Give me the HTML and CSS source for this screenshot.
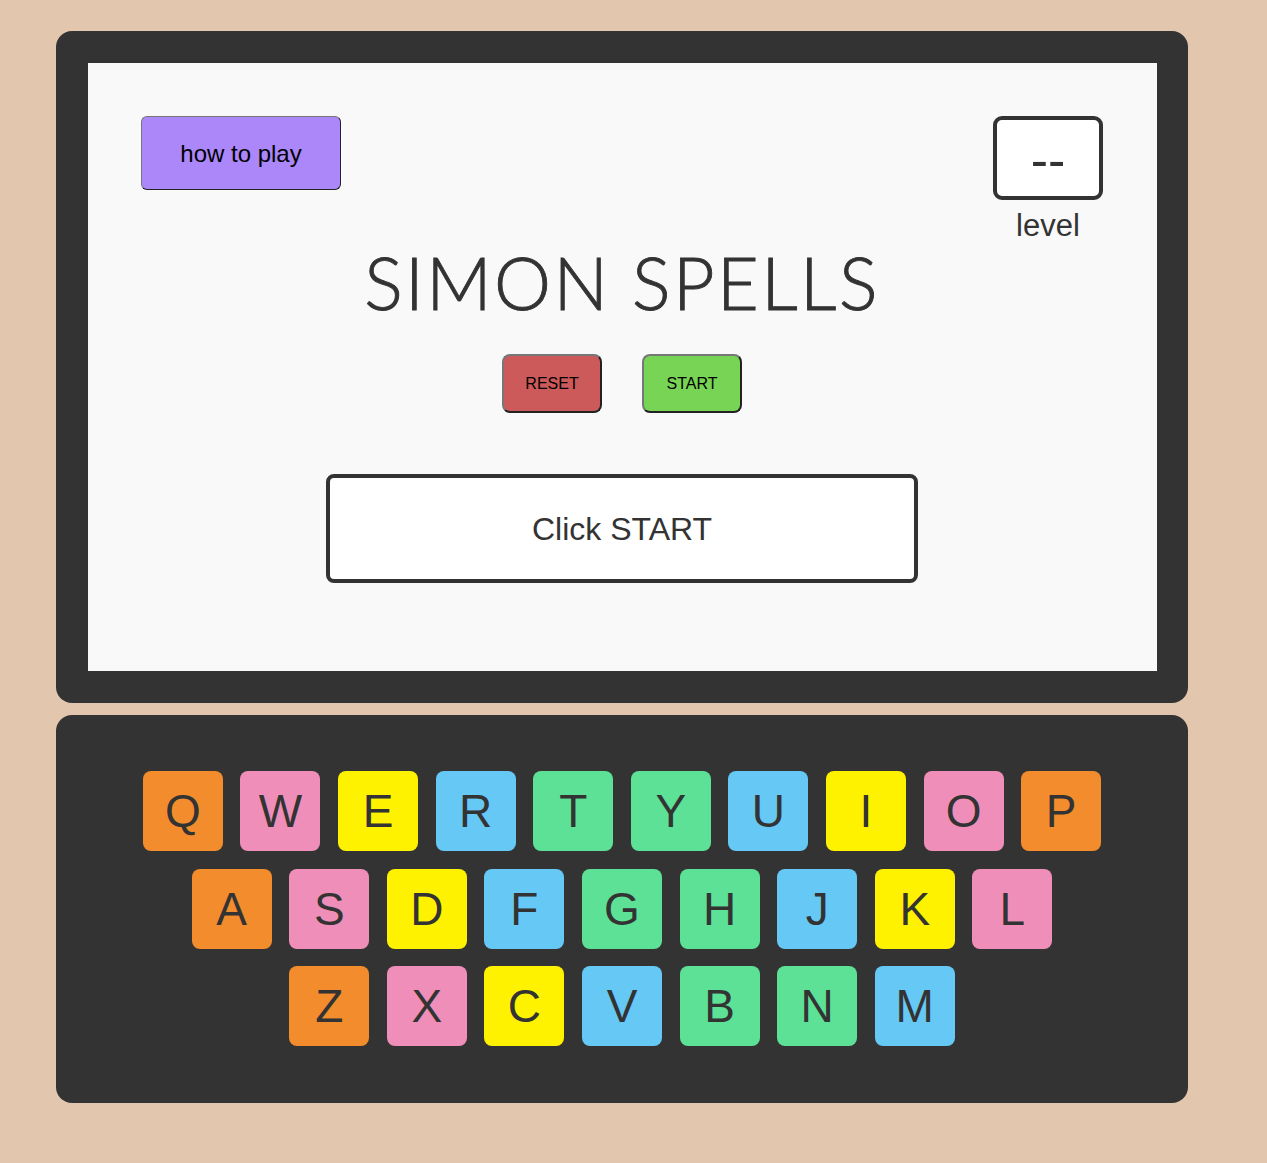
FILE: index.html
```html
<!DOCTYPE html>
<html>
<head>
<meta charset="utf-8">
<link rel="stylesheet" href="styles.css">
</head>
<body>
<div class="app">
  <div class="frame">
    <div class="screen">
      <div class="top-row">
        <button class="help-btn">how to play</button>
        <div class="level">
          <div class="level-box">--</div>
          <div class="level-label">level</div>
        </div>
      </div>
      <h1 class="title">SIMON SPELLS</h1>
      <div class="controls">
        <button class="ctrl reset">RESET</button>
        <button class="ctrl start">START</button>
      </div>
      <div class="message">Click START</div>
    </div>
  </div>
  <div class="keyboard">
    <div class="krow">
      <div class="key orange">Q</div><div class="key pink">W</div><div class="key yellow">E</div><div class="key blue">R</div><div class="key green">T</div><div class="key green">Y</div><div class="key blue">U</div><div class="key yellow">I</div><div class="key pink">O</div><div class="key orange">P</div>
    </div>
    <div class="krow">
      <div class="key orange">A</div><div class="key pink">S</div><div class="key yellow">D</div><div class="key blue">F</div><div class="key green">G</div><div class="key green">H</div><div class="key blue">J</div><div class="key yellow">K</div><div class="key pink">L</div>
    </div>
    <div class="krow">
      <div class="key orange">Z</div><div class="key pink">X</div><div class="key yellow">C</div><div class="key blue">V</div><div class="key green">B</div><div class="key green">N</div><div class="key blue">M</div>
    </div>
  </div>
</div>
</body>
</html>
```

FILE: styles.css
```css
html, body {
  margin: 0;
  padding: 0;
  background: #e2c6ae;
  font-family: "Liberation Sans", Arial, sans-serif;
}
.app {
  width: 1132px;
  margin: 31px 0 0 56px;
  display: flex;
  flex-direction: column;
  gap: 12px;
}
.frame {
  background: #333333;
  border-radius: 16px;
  padding: 32px 31px 32px 32px;
}
.screen {
  background: #f9f9f9;
  height: 608px;
  box-sizing: border-box;
  padding: 53px 54px 0 53px;
  display: flex;
  flex-direction: column;
  align-items: center;
}
.top-row {
  align-self: stretch;
  display: flex;
  justify-content: space-between;
  align-items: flex-start;
  height: 130px;
}
.help-btn {
  width: 200px;
  height: 74px;
  background: #ab87fa;
  border: 1px solid #222;
  border-top-color: #777;
  border-left-color: #777;
  border-radius: 6px;
  font-family: "Liberation Sans", Arial, sans-serif;
  font-size: 24px;
  color: #000;
  padding: 2px 0 0;
}
.level {
  display: flex;
  flex-direction: column;
  align-items: center;
}
.level-box {
  width: 110px;
  height: 84px;
  box-sizing: border-box;
  border: 4px solid #333;
  border-radius: 9px;
  background: #fff;
  color: #333;
  font-size: 52px;
  display: flex;
  align-items: center;
  justify-content: center;
  line-height: 1;
  padding-top: 4px;
}
.level-label {
  font-size: 31px;
  color: #333;
  line-height: 1;
  margin-top: 10px;
}
.title {
  margin: 0;
  font-family: "Lato", sans-serif;
  font-weight: 300;
  font-size: 72px;
  line-height: 1;
  color: #333;
  letter-spacing: 2.4px;
  -webkit-text-stroke: 0.9px #333;
}
.controls {
  display: flex;
  gap: 40px;
  margin-top: 36px;
}
.ctrl {
  width: 100px;
  height: 59px;
  border: 2px solid #222;
  border-top-color: #777;
  border-left-color: #777;
  border-radius: 8px;
  font-family: "Liberation Sans", Arial, sans-serif;
  font-size: 16px;
  color: #000;
  padding: 0;
}
.reset { background: #cd5a5a; }
.start { background: #77d455; }
.message {
  margin-top: 61px;
  width: 592px;
  height: 109px;
  box-sizing: border-box;
  border: 4px solid #333;
  border-radius: 8px;
  background: #fff;
  color: #333;
  font-size: 32px;
  display: flex;
  align-items: center;
  justify-content: center;
  padding-top: 2px;
}
.keyboard {
  background: #333333;
  border-radius: 16px;
  padding: 56px 0 57px;
  display: flex;
  flex-direction: column;
  align-items: center;
  gap: 17.5px;
}
.krow {
  display: flex;
  gap: 17.6px;
}
.key {
  width: 80px;
  height: 80px;
  border-radius: 8px;
  display: flex;
  align-items: center;
  justify-content: center;
  font-size: 46px;
  color: #333;
}
.orange { background: #f28c2c; }
.pink { background: #ef8fb9; }
.yellow { background: #fff200; }
.blue { background: #66c8f5; }
.green { background: #5ce196; }
```
